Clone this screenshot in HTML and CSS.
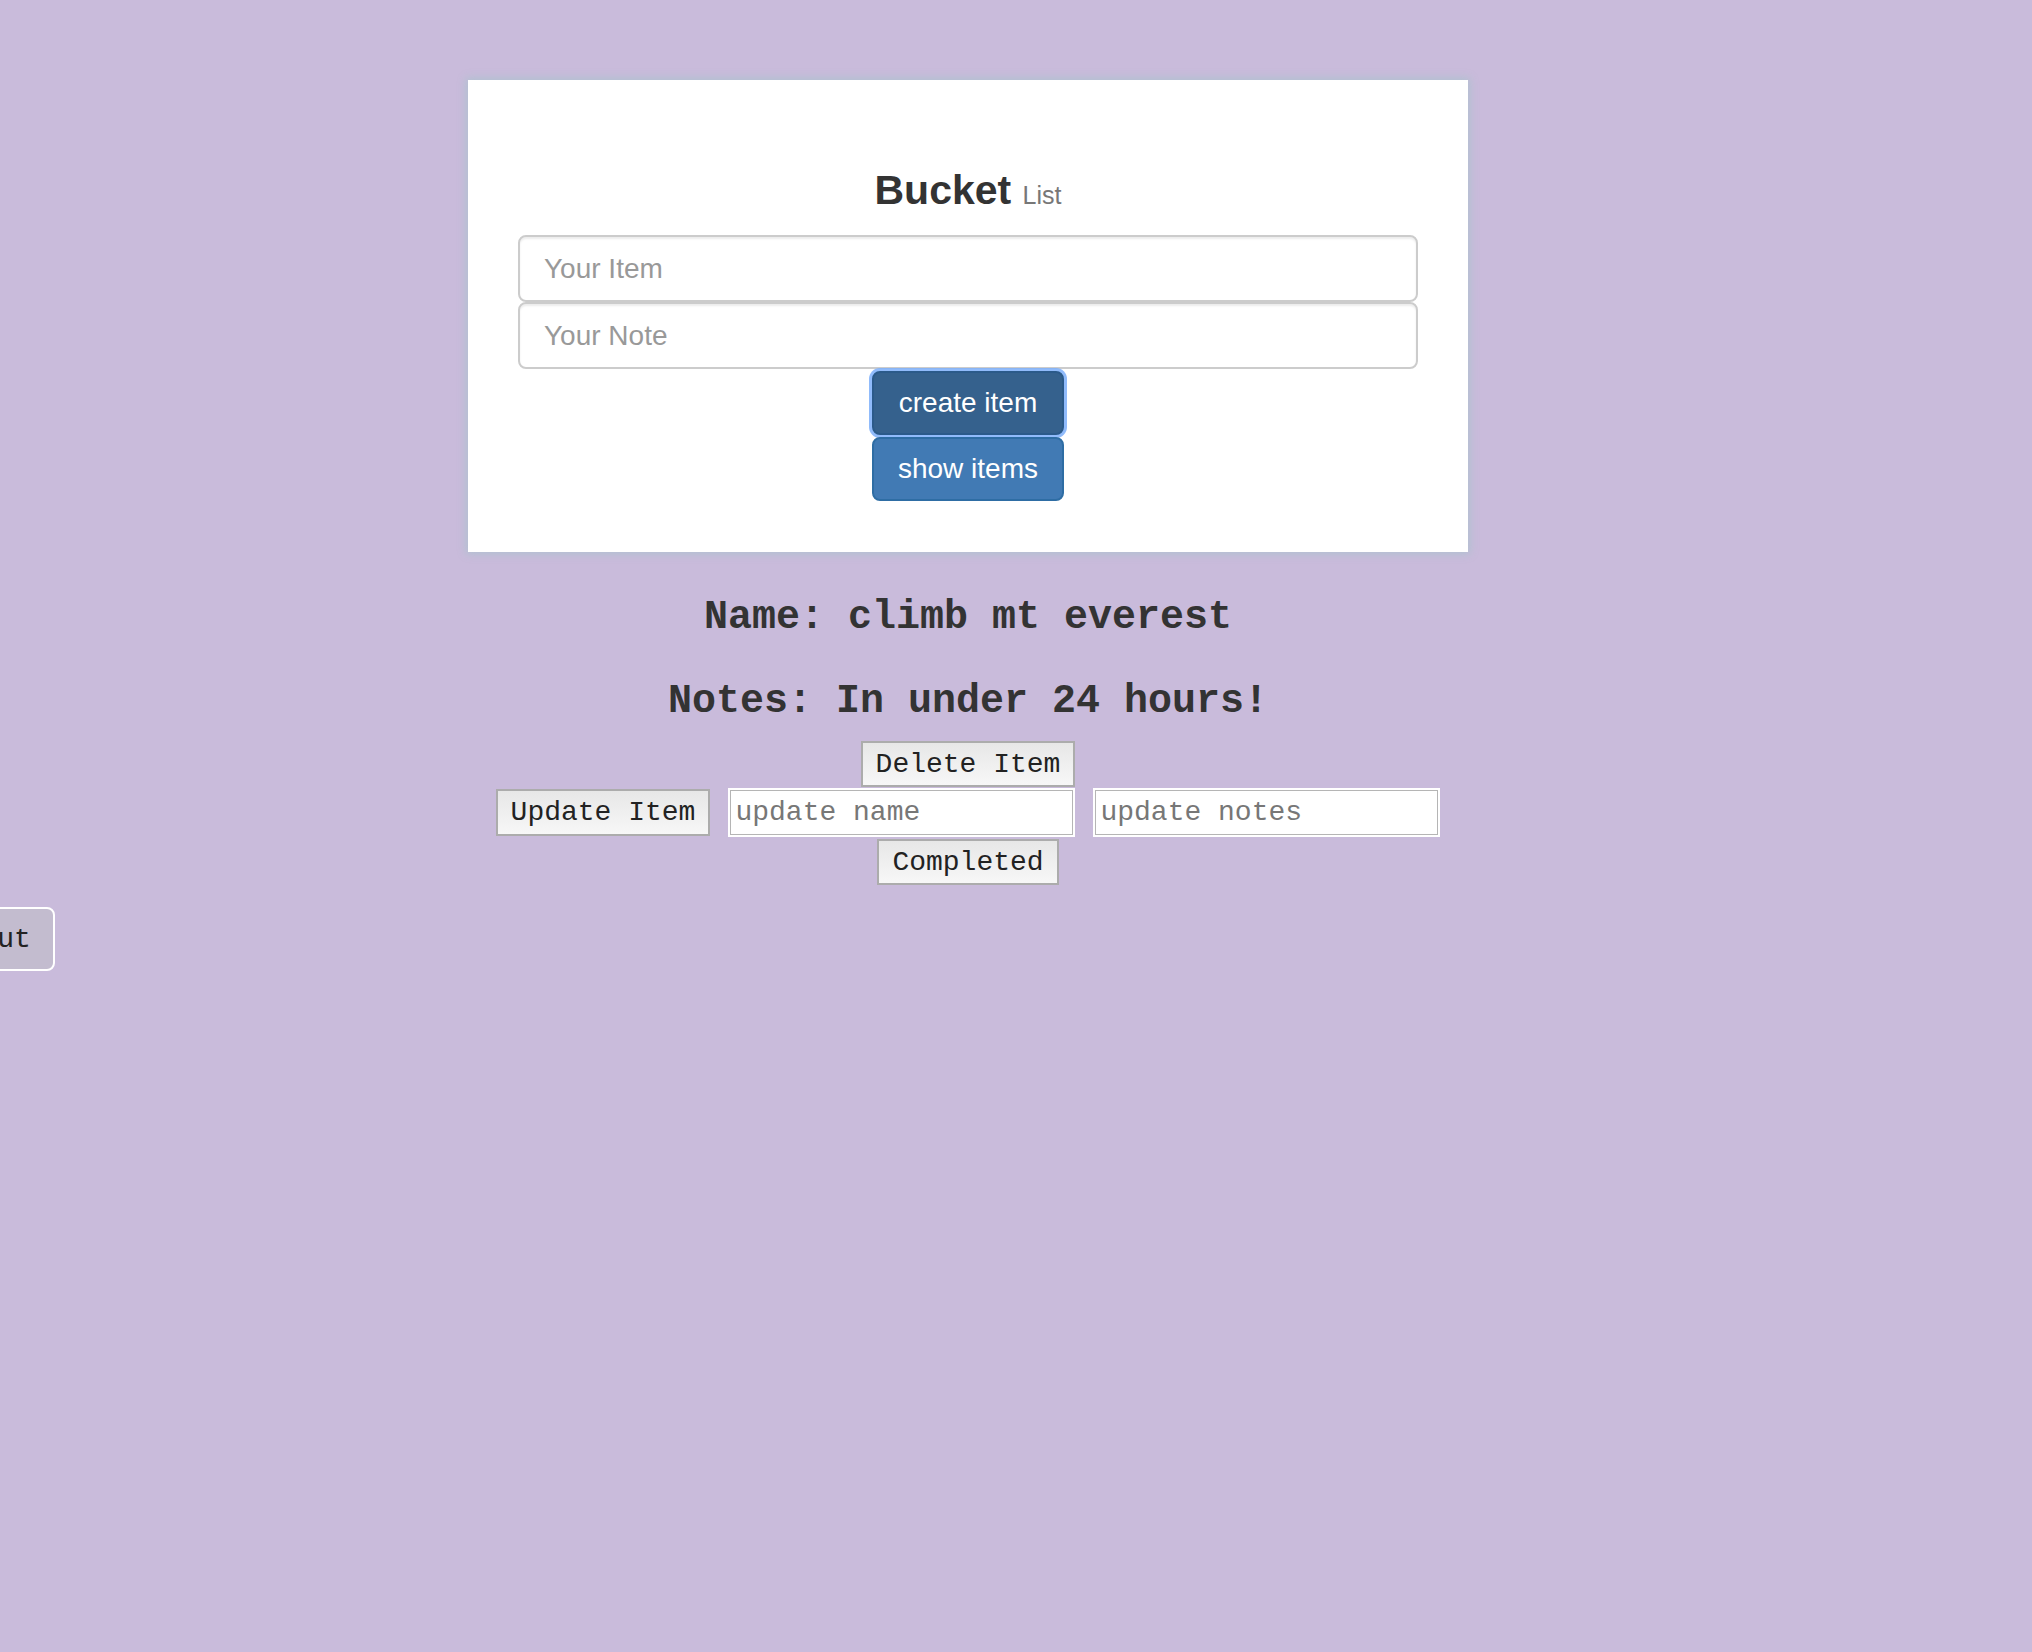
FILE: index.html
```html
<!DOCTYPE html>
<html lang="en">
<head>
<meta charset="utf-8">
<title>Bucket List</title>
<link rel="stylesheet" href="styles.css">
</head>
<body>
<div class="wrap">
  <div class="card">
    <h3 class="title">Bucket <small>List</small></h3>
    <input class="field" type="text" placeholder="Your Item">
    <input class="field" type="text" placeholder="Your Note">
    <div class="actions">
      <button class="btn btn-create">create item</button>
      <button class="btn btn-show">show items</button>
    </div>
  </div>
  <div class="item">
    <h2 class="line">Name: climb mt everest</h2>
    <h2 class="line notes">Notes: In under 24 hours!</h2>
    <div class="controls">
      <button class="gbtn">Delete Item</button>
      <div class="row">
        <button class="gbtn">Update Item</button>
        <input class="upd" type="text" placeholder="update name">
        <input class="upd" type="text" placeholder="update notes">
      </div>
      <button class="gbtn">Completed</button>
    </div>
  </div>
</div>
<button class="logout">Logout</button>
</body>
</html>
```
FILE: styles.css
```css
html, body {
  margin: 0;
  padding: 0;
  background: #c9bbdb;
  min-height: 100%;
}
body {
  font-family: "Liberation Sans", Arial, sans-serif;
  color: #333;
}
.wrap {
  width: 1000px;
  margin-left: 468px;
  padding-top: 80px;
}
.card {
  box-sizing: border-box;
  height: 472px;
  background: #fff;
  padding: 87px 50px 0;
  box-shadow: 0 0 8px 2px rgba(170, 195, 205, 0.8);
  display: flex;
  flex-direction: column;
}
.title {
  margin: 0 0 17px;
  font-size: 41px;
  line-height: 46px;
  font-weight: bold;
  text-align: center;
  color: #333;
}
.title small {
  font-size: 25px;
  font-weight: normal;
  color: #777;
}
.field {
  box-sizing: border-box;
  width: 100%;
  height: 67px;
  margin: 0;
  padding: 0 24px;
  border: 2px solid #ccc;
  border-radius: 8px;
  box-shadow: inset 0 2px 2px rgba(0, 0, 0, 0.075);
  font-family: "Liberation Sans", Arial, sans-serif;
  font-size: 28px;
  color: #555;
  background: #fff;
  outline: none;
}
.field::placeholder {
  color: #999;
}
.actions {
  display: flex;
  flex-direction: column;
  align-items: center;
  gap: 2px;
  margin-top: 2px;
}
.btn {
  box-sizing: border-box;
  width: 192px;
  height: 64px;
  border: 2px solid #2e6da4;
  border-radius: 8px;
  background: #417ab4;
  color: #fff;
  font-family: "Liberation Sans", Arial, sans-serif;
  font-size: 28px;
  padding: 0;
}
.btn-create {
  background: #35618d;
  border-color: #2b5a8a;
  box-shadow: 0 0 0 3px rgba(125, 175, 250, 0.85);
}
.item {
  padding-top: 43px;
  text-align: center;
}
.line {
  margin: 0;
  font-family: "Liberation Mono", "Courier New", monospace;
  font-size: 40px;
  line-height: 46px;
  font-weight: bold;
  color: #333;
}
.notes {
  margin-top: 38px;
}
.controls {
  margin-top: 16px;
  display: flex;
  flex-direction: column;
  align-items: center;
}
.row {
  display: flex;
  align-items: center;
  gap: 18px;
  margin: 1px 0 2px;
}
.gbtn {
  box-sizing: border-box;
  height: 46px;
  padding: 0 13px;
  border: 2px solid #acacac;
  background: linear-gradient(#e7e7e7, #f7f7f7);
  font-family: "Liberation Mono", "Courier New", monospace;
  font-size: 28px;
  color: #222;
  border-radius: 0;
}
.row .gbtn {
  height: 47px;
}
.upd {
  box-sizing: border-box;
  width: 347px;
  height: 49px;
  margin: 0;
  padding: 0 5px;
  border: 2px solid #fff;
  box-shadow: inset 0 0 0 1px #b5b5b5;
  background: #fff;
  font-family: "Liberation Mono", "Courier New", monospace;
  font-size: 28px;
  color: #333;
  outline: none;
}
.upd::placeholder {
  color: #777;
}
.logout {
  display: block;
  box-sizing: border-box;
  height: 64px;
  margin: 22px 0 0 -94px;
  padding: 0 22px;
  border: 2px solid #fff;
  border-radius: 8px;
  background: #c3bccf;
  font-family: "Liberation Mono", "Courier New", monospace;
  font-size: 28px;
  color: #222;
}
```
